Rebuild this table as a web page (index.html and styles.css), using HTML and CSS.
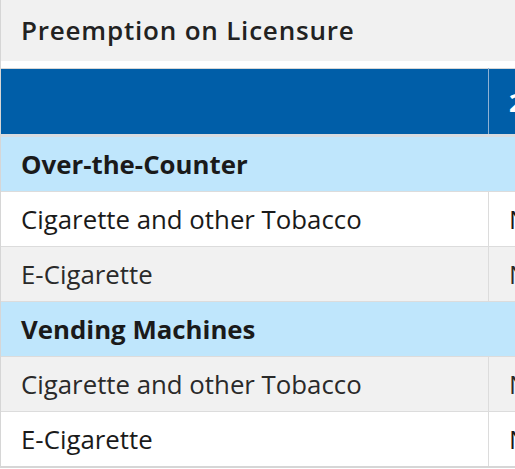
FILE: index.html
```html
<!DOCTYPE html>
<html>
<head>
<meta charset="utf-8">
<link rel="stylesheet" href="styles.css">
</head>
<body>
<div class="card">
  <h2 class="title">Preemption on Licensure</h2>
  <table class="grid">
    <thead>
      <tr><th class="c1"></th><th class="c2">2022</th></tr>
    </thead>
    <tbody>
      <tr class="group"><td colspan="2">Over-the-Counter</td></tr>
      <tr class="odd"><td class="c1">Cigarette and other Tobacco</td><td class="c2">No</td></tr>
      <tr class="even"><td class="c1">E-Cigarette</td><td class="c2">No</td></tr>
      <tr class="group"><td colspan="2">Vending Machines</td></tr>
      <tr class="even"><td class="c1">Cigarette and other Tobacco</td><td class="c2">No</td></tr>
      <tr class="odd"><td class="c1">E-Cigarette</td><td class="c2">No</td></tr>
    </tbody>
  </table>
</div>
</body>
</html>
```
FILE: styles.css
```css
html, body {
  margin: 0;
  padding: 0;
  background: #fff;
  overflow: hidden;
}
.card {
  width: 700px;
  border-left: 1px solid #d6d6d6;
  box-sizing: border-box;
}
.title {
  margin: 0;
  height: 61px;
  background: #f1f1f1;
  font-family: "Open Sans", sans-serif;
  font-weight: 600;
  font-size: 26px;
  letter-spacing: 0.8px;
  color: #222;
  padding: 0 0 0 20px;
  line-height: 60px;
  box-sizing: border-box;
}
.grid {
  margin-top: 7px;
  border-collapse: collapse;
  width: 700px;
  font-family: "Open Sans", sans-serif;
  font-size: 25.8px;
  color: #1a1a1a;
}
.grid th {
  background: #005ea8;
  color: #fff;
  height: 65px;
  padding: 0 20px;
  text-align: left;
  font-weight: 700;
  border-top: 1px solid #d6d6d6;
  border-bottom: 3px solid #d8dce0;
}
.grid th.c1 {
  width: 447px;
  border-right: 1px solid #8fb2d4;
}
.grid td {
  height: 54px;
  padding: 0 20px;
  border-top: 1px solid #dcdcdc;
}
.grid td.c1 {
  border-right: 1px solid #dcdcdc;
}
.grid tbody tr:last-child td {
  border-bottom: 2px solid #d6d6d6;
}
.group td {
  background: #bfe6fc;
  font-weight: 700;
  color: #1a1a1a;
}
.odd td { background: #fff; }
.even td { background: #f1f1f1; color: #2a2a2a; }
```
